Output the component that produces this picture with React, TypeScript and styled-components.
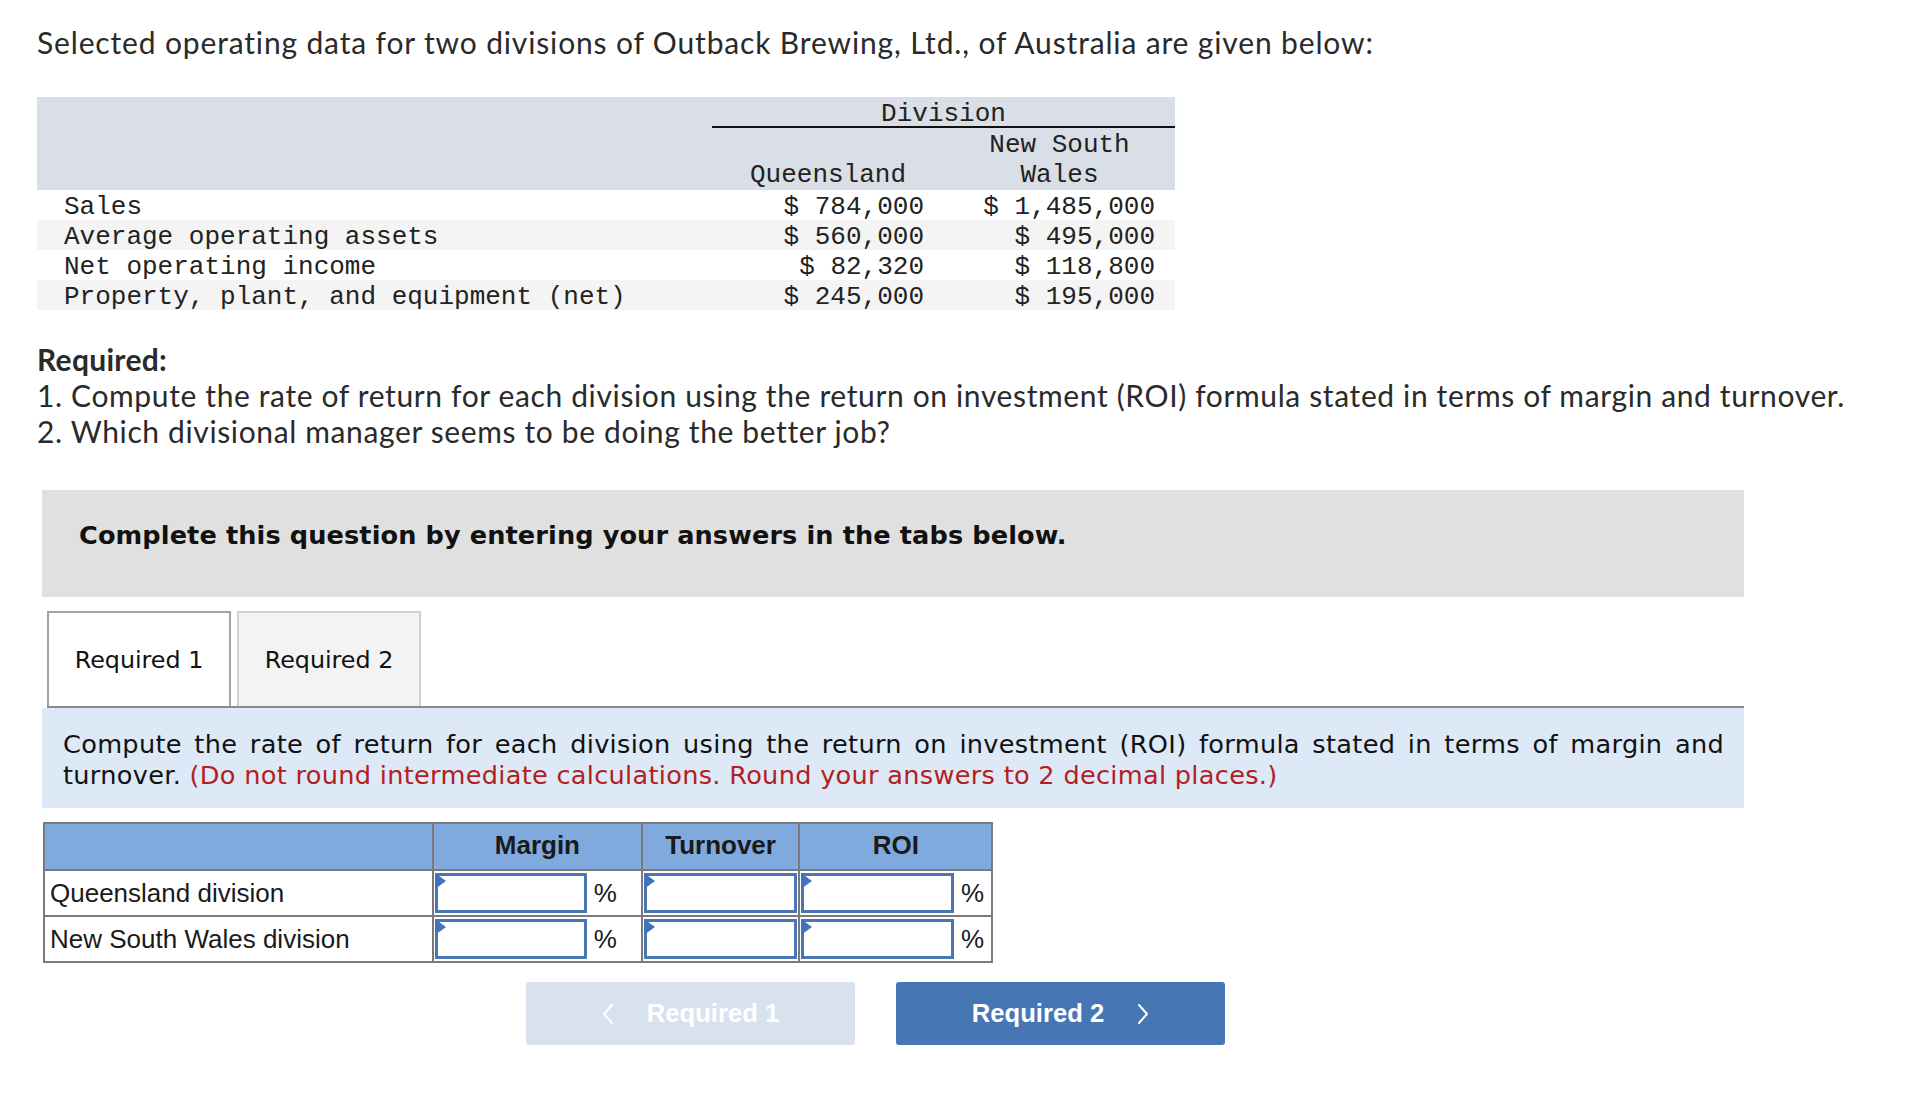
import React from 'react'
import styled, { createGlobalStyle } from 'styled-components'

const GlobalStyle = createGlobalStyle`
  body {
    margin: 0;
    background: #ffffff;
    color: #222;
  }
`

const Page = styled.div`
  padding: 24px 0 60px 37px;
`

const Intro = styled.p`
  margin: 0;
  font-family: Lato, "Open Sans", sans-serif;
  font-size: 30px;
  line-height: 36px;
  letter-spacing: 0.85px;
  color: #2a2a2a;
`

const DataTable = styled.table`
  margin-top: 37px;
  width: 1138px;
  border-collapse: collapse;
  border-spacing: 0;
  font-family: "Liberation Mono", "Courier New", monospace;
  font-size: 26px;
  color: #222;

  th, td {
    padding: 0;
    font-weight: normal;
  }
`

const HeadRow = styled.tr`
  background: #d9dee7;
`

const DivisionHead = styled.th`
  height: 24px;
  padding-top: 5px !important;
  line-height: 24px;
  text-align: center;
  border-bottom: 2px solid #111;
`

const ColHead = styled.th`
  text-align: center;
  vertical-align: bottom;
  line-height: 29.5px;
  padding-top: 3px !important;
`

const DataRow = styled.tr<{ $striped?: boolean }>`
  background: ${p => (p.$striped ? '#f4f4f4' : '#ffffff')};

  td {
    height: 25px;
    line-height: 25px;
    padding-top: 5px;
  }
`

const RowLabel = styled.td`
  padding-left: 27px !important;
  white-space: pre;
`

const Amount = styled.td`
  text-align: right;
  padding-right: 20px !important;
  white-space: pre;
`

const Required = styled.div`
  margin-top: 31px;
  font-family: Lato, "Open Sans", sans-serif;
  font-size: 30px;
  line-height: 36px;
  letter-spacing: 0.63px;
  color: #2a2a2a;

  strong {
    font-weight: 700;
    letter-spacing: 0.3px;
  }

  p {
    margin: 0;
  }
`

const Question = styled.section`
  margin: 41px 0 0 5px;
  width: 1702px;
`

const Banner = styled.div`
  height: 107px;
  box-sizing: border-box;
  padding: 30px 37px 0;
  background: #e0e0e0;
  font-family: "DejaVu Sans", Verdana, sans-serif;
  font-weight: bold;
  font-size: 25.6px;
  line-height: 30px;
  letter-spacing: 0.1px;
  color: #111;
`

const Tabs = styled.div`
  display: flex;
  gap: 6px;
  margin: 14px 0 0 5px;
  border-bottom: 2px solid #8a8a8a;
`

const Tab = styled.div<{ $active?: boolean }>`
  width: 184px;
  height: 95px;
  box-sizing: border-box;
  display: flex;
  align-items: center;
  justify-content: center;
  font-family: "DejaVu Sans", Verdana, sans-serif;
  font-size: 23.8px;
  color: #111;
  background: ${p => (p.$active ? '#ffffff' : '#f3f3f3')};
  border: ${p => (p.$active ? '2px solid #a3a3a3' : '2px solid #d0d0d0')};
  border-bottom: none;
`

const Instruction = styled.div`
  padding: 21px 20px 17px 21px;
  background: #dde9f6;
  font-family: "DejaVu Sans", Verdana, sans-serif;
  font-size: 25.6px;
  line-height: 31px;
  letter-spacing: 0.3px;
  text-align: justify;
  color: #111;
`

const Note = styled.span`
  color: #b3201e;
`

const AnswerTable = styled.table`
  margin: 14px 0 0 1px;
  width: 950px;
  border-collapse: collapse;
  border-spacing: 0;
  font-family: "Liberation Sans", Arial, sans-serif;
  font-size: 26px;
  color: #1a1a1a;

  th, td {
    padding: 0;
  }
`

const AnswerHead = styled.tr`
  background: #80aadd;

  th {
    height: 42px;
    padding-bottom: 3px;
    font-weight: bold;
    text-align: center;
    border: 2px solid #7a7a7a;
  }
`

const AnswerRow = styled.tr`
  td {
    height: 42px;
    border-top: 2px solid #7a7a7a;
    border-bottom: 2px solid #7a7a7a;
  }
`

const LabelCell = styled.td`
  padding-left: 5px !important;
  border-left: 2px solid #7a7a7a;
  border-right: 2px solid #7a7a7a;
`

const InputCell = styled.td<{ $closed?: boolean }>`
  padding: 1px !important;
  border-left: 2px solid #7a7a7a;
  border-right: ${p => (p.$closed ? '2px solid #7a7a7a' : 'none')};
`

const Field = styled.div`
  position: relative;
  height: 40px;
  box-sizing: border-box;
  border: 3px solid #4a77b4;
  background: #fff;
`

const Marker = styled.span`
  position: absolute;
  top: -3px;
  left: -3px;
  width: 0;
  height: 0;
  border-top: 8px solid transparent;
  border-bottom: 8px solid transparent;
  border-left: 11px solid #3d74bd;
`

const UnitCell = styled.td`
  padding-left: 6px !important;
  border-right: 2px solid #7a7a7a;
`

const Nav = styled.div`
  display: flex;
  gap: 41px;
  margin: 19px 0 0 484px;
`

const NavButton = styled.button<{ $disabled?: boolean }>`
  width: 329px;
  height: 63px;
  display: flex;
  align-items: center;
  justify-content: center;
  gap: 33px;
  border: none;
  border-radius: 3px;
  background: ${p => (p.$disabled ? '#d8e2ee' : '#4677b4')};
  color: #fff;
  font-family: "Liberation Sans", Arial, sans-serif;
  font-weight: bold;
  font-size: 25.6px;
  padding: 0;
`

const Chevron = ({ dir }: { dir: 'left' | 'right' }) => (
  <svg width="12" height="22" viewBox="0 0 12 22" fill="none">
    <polyline
      points={dir === 'left' ? '10,2 2,11 10,20' : '2,2 10,11 2,20'}
      stroke="#fff"
      strokeWidth="2"
      strokeLinecap="round"
      strokeLinejoin="round"
    />
  </svg>
)

const rows = [
  { label: 'Sales', q: '$ 784,000', n: '$ 1,485,000' },
  { label: 'Average operating assets', q: '$ 560,000', n: '$ 495,000' },
  { label: 'Net operating income', q: '$ 82,320', n: '$ 118,800' },
  { label: 'Property, plant, and equipment (net)', q: '$ 245,000', n: '$ 195,000' },
]

const divisions = ['Queensland division', 'New South Wales division']

const App = (): JSX.Element => {
  return (
    <Page>
      <GlobalStyle />
      <Intro>Selected operating data for two divisions of Outback Brewing, Ltd., of Australia are given below:</Intro>

      <DataTable>
        <colgroup>
          <col style={{ width: 675 }} />
          <col style={{ width: 232 }} />
          <col style={{ width: 231 }} />
        </colgroup>
        <thead>
          <HeadRow>
            <th rowSpan={2}></th>
            <DivisionHead colSpan={2}>Division</DivisionHead>
          </HeadRow>
          <HeadRow>
            <ColHead>Queensland</ColHead>
            <ColHead>New South<br />Wales</ColHead>
          </HeadRow>
        </thead>
        <tbody>
          {rows.map((r, i) => (
            <DataRow key={r.label} $striped={i % 2 === 1}>
              <RowLabel>{r.label}</RowLabel>
              <Amount>{r.q}</Amount>
              <Amount>{r.n}</Amount>
            </DataRow>
          ))}
        </tbody>
      </DataTable>

      <Required>
        <strong>Required:</strong>
        <p>1. Compute the rate of return for each division using the return on investment (ROI) formula stated in terms of margin and turnover.</p>
        <p>2. Which divisional manager seems to be doing the better job?</p>
      </Required>

      <Question>
        <Banner>Complete this question by entering your answers in the tabs below.</Banner>

        <Tabs>
          <Tab $active>Required 1</Tab>
          <Tab>Required 2</Tab>
        </Tabs>

        <Instruction>
          Compute the rate of return for each division using the return on investment (ROI) formula stated in terms of margin and turnover.{' '}
          <Note>(Do not round intermediate calculations. Round your answers to 2 decimal places.)</Note>
        </Instruction>

        <AnswerTable>
          <colgroup>
            <col style={{ width: 390 }} />
            <col style={{ width: 155 }} />
            <col style={{ width: 54 }} />
            <col style={{ width: 158 }} />
            <col style={{ width: 156 }} />
            <col style={{ width: 37 }} />
          </colgroup>
          <thead>
            <AnswerHead>
              <th></th>
              <th colSpan={2}>Margin</th>
              <th>Turnover</th>
              <th colSpan={2}>ROI</th>
            </AnswerHead>
          </thead>
          <tbody>
            {divisions.map(d => (
              <AnswerRow key={d}>
                <LabelCell>{d}</LabelCell>
                <InputCell><Field><Marker /></Field></InputCell>
                <UnitCell>%</UnitCell>
                <InputCell $closed><Field><Marker /></Field></InputCell>
                <InputCell><Field><Marker /></Field></InputCell>
                <UnitCell>%</UnitCell>
              </AnswerRow>
            ))}
          </tbody>
        </AnswerTable>

        <Nav>
          <NavButton $disabled>
            <Chevron dir="left" />
            <span>Required 1</span>
          </NavButton>
          <NavButton>
            <span>Required 2</span>
            <Chevron dir="right" />
          </NavButton>
        </Nav>
      </Question>
    </Page>
  )
}

export default App
